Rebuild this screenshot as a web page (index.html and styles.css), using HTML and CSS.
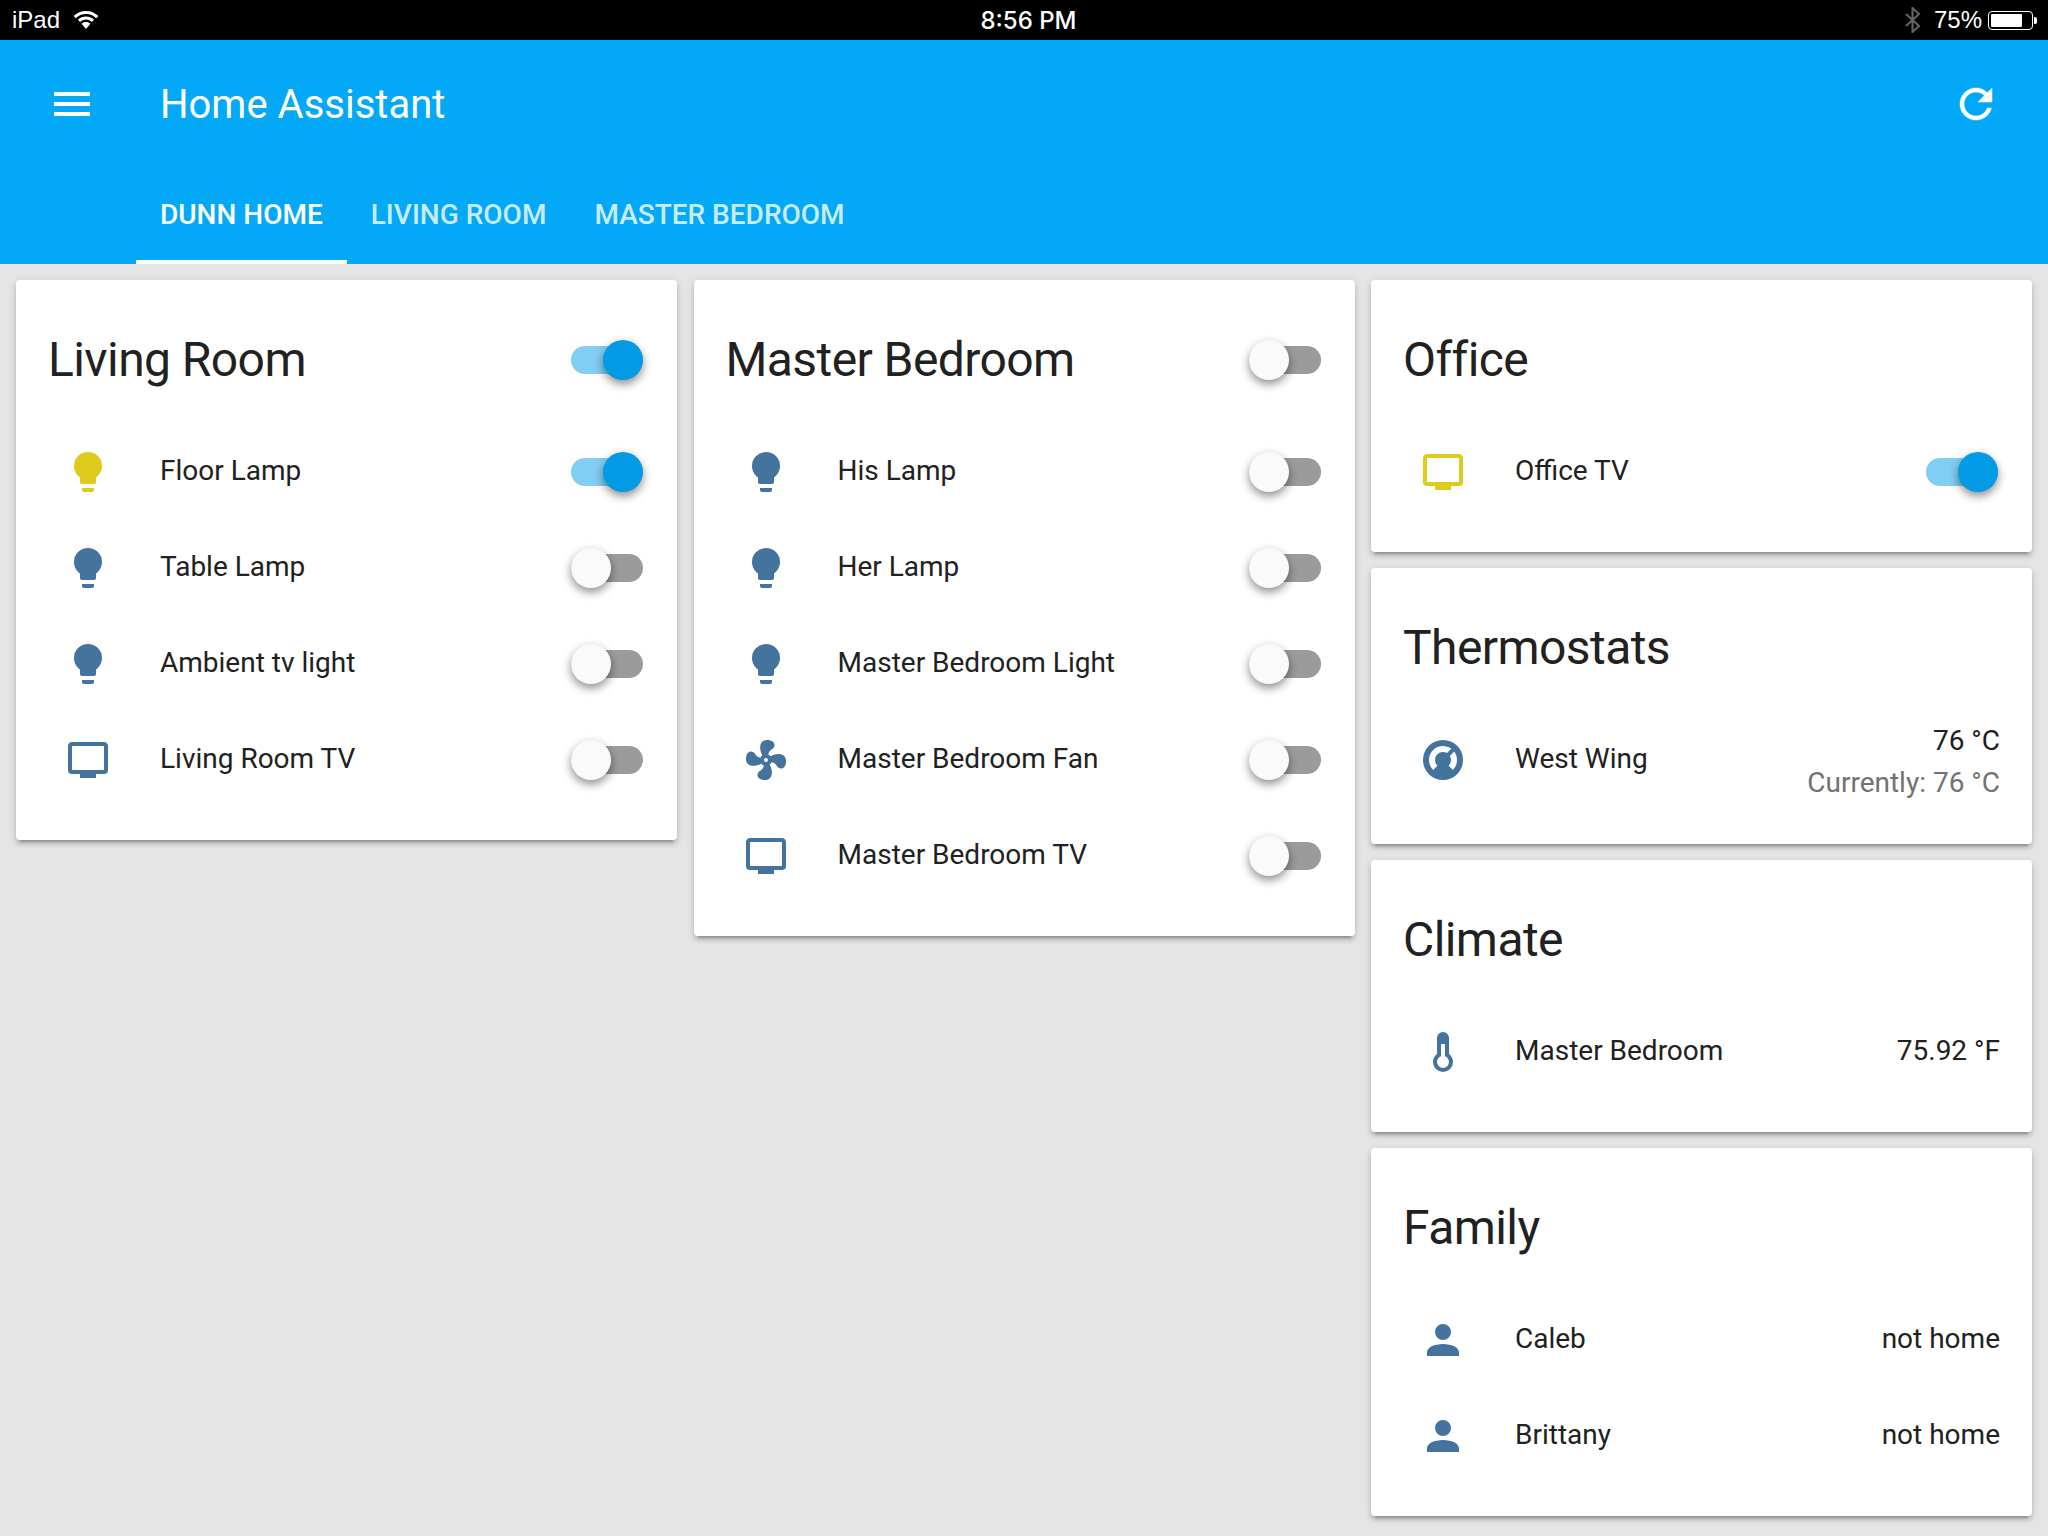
FILE: index.html
```html
<!DOCTYPE html>
<html lang="en">
<head>
    <meta charset="UTF-8">
    <title>Home Assistant</title>
    <link rel="stylesheet" href="styles.css">
</head>
<body>
    <svg class="defs">
        <symbol id="i-bulb" viewBox="0 0 24 24"><path d="M12,2A7,7 0 0,0 5,9C5,11.38 6.19,13.47 8,14.74V17A1,1 0 0,0 9,18H15A1,1 0 0,0 16,17V14.74C17.81,13.47 19,11.38 19,9A7,7 0 0,0 12,2M9,21A1,1 0 0,0 10,22H14A1,1 0 0,0 15,21V20H9V21Z"/></symbol>
        <symbol id="i-tv" viewBox="0 0 24 24"><path d="M20,17H4V5H20M20,3H4C2.89,3 2,3.89 2,5V17A2,2 0 0,0 4,19H8V21H16V19H20A2,2 0 0,0 22,17V5C22,3.89 21.1,3 20,3Z"/></symbol>
        <symbol id="i-fan" viewBox="0 0 24 24"><path d="M12,11A1,1 0 0,0 11,12A1,1 0 0,0 12,13A1,1 0 0,0 13,12A1,1 0 0,0 12,11M12.5,2C17,2 17.11,5.57 14.75,6.75C13.76,7.24 13.32,8.29 13.13,9.22C13.61,9.42 14.03,9.73 14.35,10.13C18.05,8.13 22.03,8.92 22.03,12.5C22.03,17 18.46,17.1 17.28,14.73C16.78,13.74 15.72,13.3 14.79,13.11C14.59,13.59 14.28,14 13.88,14.34C15.87,18.03 15.08,22 11.5,22C7,22 6.91,18.42 9.27,17.24C10.25,16.75 10.69,15.71 10.89,14.79C10.4,14.59 9.97,14.27 9.65,13.87C5.96,15.85 2,15.07 2,11.5C2,7 5.56,6.89 6.74,9.26C7.24,10.25 8.29,10.68 9.22,10.87C9.41,10.39 9.73,9.97 10.14,9.65C8.15,5.96 8.94,2 12.5,2Z"/></symbol>
        <symbol id="i-person" viewBox="0 0 24 24"><path d="M12,4A4,4 0 0,1 16,8A4,4 0 0,1 12,12A4,4 0 0,1 8,8A4,4 0 0,1 12,4M12,14C16.42,14 20,15.79 20,18V20H4V18C4,15.79 7.58,14 12,14Z"/></symbol>
        <symbol id="i-temp" viewBox="0 0 24 24"><path d="M17,17A5,5 0 0,1 12,22A5,5 0 0,1 7,17C7,15.36 7.79,13.91 9,13V5A3,3 0 0,1 12,2A3,3 0 0,1 15,5V13C16.21,13.91 17,15.36 17,17M11,8V14.17C9.83,14.58 9,15.69 9,17A3,3 0 0,0 12,20A3,3 0 0,0 15,17C15,15.69 14.17,14.58 13,14.17V8H11Z"/></symbol>
        <symbol id="i-nest" viewBox="0 0 24 24"><path fill-rule="evenodd" d="M16.95,16.95L14.83,14.83C15.55,14.1 16,13.1 16,12C16,11.26 15.79,10.57 15.43,10L17.6,7.81C18.5,9.03 19,10.5 19,12C19,13.78 18.32,15.57 16.95,16.95M12,5C13.5,5 15,5.5 16.19,6.4L14,8.56C13.43,8.21 12.74,8 12,8A4,4 0 0,0 8,12C8,13.1 8.45,14.1 9.17,14.83L7.05,16.95C5.68,15.57 5,13.78 5,12A7,7 0 0,1 12,5M12,2A10,10 0 0,0 2,12A10,10 0 0,0 12,22A10,10 0 0,0 22,12A10,10 0 0,0 12,2Z"/></symbol>
    </svg>

    <div class="statusbar">
        <div class="status-left">
            <span>iPad</span>
            <svg class="wifi" viewBox="0 0 26 18"><path d="M13,0C8,0 3.900,1.900 .6,5L2.700,7.200C5.400,4.600 9,3 13,3C17,3 20.600,4.600 23.300,7.200L25.400,5C22.100,1.900 18,0 13,0M13,5.500C9.900,5.500 7.200,6.700 5,8.700L7.100,10.900C8.700,9.400 10.700,8.500 13,8.500C15.300,8.500 17.300,9.400 18.900,10.900L21,8.700C18.800,6.700 16.100,5.500 13,5.500M13,11C11.300,11 9.800,11.600 8.600,12.700L13,18L17.400,12.700C16.200,11.600 14.700,11 13,11Z"/></svg>
        </div>
        <span class="status-time">8:56 PM</span>
        <div class="status-right">
            <svg class="bluetooth" viewBox="0 0 16 26"><path d="M1,7L14,19L7.500,25V1L14,7L1,19" fill="none" stroke="#666" stroke-width="2"/></svg>
            <span>75%</span>
            <div class="battery"><div class="battery-fill"></div></div>
            <div class="battery-nub"></div>
        </div>
    </div>

    <header class="app-header">
        <div class="toolbar">
            <svg class="icon white" viewBox="0 0 24 24"><path d="M3,6H21V8H3V6M3,11H21V13H3V11M3,16H21V18H3V16Z"/></svg>
            <div class="app-title">Home Assistant</div>
            <svg class="icon white refresh" viewBox="0 0 24 24"><path d="M17.65 6.35C16.2 4.9 14.21 4 12 4c-4.42 0-7.99 3.58-7.99 8s3.57 8 7.99 8c3.73 0 6.84-2.55 7.73-6h-2.08c-.82 2.33-3.04 4-5.65 4-3.31 0-6-2.69-6-6s2.69-6 6-6c1.66 0 3.14.69 4.22 1.78L13 11h7V4l-2.35 2.35z"/></svg>
        </div>
        <nav class="tabs">
            <a class="tab active">Dunn Home</a>
            <a class="tab">Living Room</a>
            <a class="tab">Master Bedroom</a>
        </nav>
    </header>

    <main class="columns">
        <div class="column">
            <section class="card">
                <div class="card-title"><h2>Living Room</h2><div class="toggle on"></div></div>
                <div class="row"><svg class="icon yellow"><use href="#i-bulb"/></svg><span class="name">Floor Lamp</span><div class="toggle on"></div></div>
                <div class="row"><svg class="icon blue"><use href="#i-bulb"/></svg><span class="name">Table Lamp</span><div class="toggle"></div></div>
                <div class="row"><svg class="icon blue"><use href="#i-bulb"/></svg><span class="name">Ambient tv light</span><div class="toggle"></div></div>
                <div class="row"><svg class="icon blue"><use href="#i-tv"/></svg><span class="name">Living Room TV</span><div class="toggle"></div></div>
            </section>
        </div>
        <div class="column">
            <section class="card">
                <div class="card-title"><h2>Master Bedroom</h2><div class="toggle"></div></div>
                <div class="row"><svg class="icon blue"><use href="#i-bulb"/></svg><span class="name">His Lamp</span><div class="toggle"></div></div>
                <div class="row"><svg class="icon blue"><use href="#i-bulb"/></svg><span class="name">Her Lamp</span><div class="toggle"></div></div>
                <div class="row"><svg class="icon blue"><use href="#i-bulb"/></svg><span class="name">Master Bedroom Light</span><div class="toggle"></div></div>
                <div class="row"><svg class="icon blue"><use href="#i-fan"/></svg><span class="name">Master Bedroom Fan</span><div class="toggle"></div></div>
                <div class="row"><svg class="icon blue"><use href="#i-tv"/></svg><span class="name">Master Bedroom TV</span><div class="toggle"></div></div>
            </section>
        </div>
        <div class="column">
            <section class="card">
                <div class="card-title"><h2>Office</h2></div>
                <div class="row"><svg class="icon yellow"><use href="#i-tv"/></svg><span class="name">Office TV</span><div class="toggle on"></div></div>
            </section>
            <section class="card">
                <div class="card-title"><h2>Thermostats</h2></div>
                <div class="row row-tall">
                    <svg class="icon blue"><use href="#i-nest"/></svg><span class="name">West Wing</span>
                    <div class="value-stack"><div>76 °C</div><div class="muted">Currently: 76 °C</div></div>
                </div>
            </section>
            <section class="card">
                <div class="card-title"><h2>Climate</h2></div>
                <div class="row"><svg class="icon blue"><use href="#i-temp"/></svg><span class="name">Master Bedroom</span><span class="value">75.92 °F</span></div>
            </section>
            <section class="card">
                <div class="card-title"><h2>Family</h2></div>
                <div class="row"><svg class="icon blue"><use href="#i-person"/></svg><span class="name">Caleb</span><span class="value">not home</span></div>
                <div class="row"><svg class="icon blue"><use href="#i-person"/></svg><span class="name">Brittany</span><span class="value">not home</span></div>
            </section>
        </div>
    </main>
</body>
</html>
```

FILE: styles.css
```css
body {
    margin: 0;
    background-color: #E5E5E5;
    color: #212121;
    font-family: Roboto, sans-serif;
    font-size: 28px;
}
.defs {
    display: none;
}
.statusbar {
    height: 40px;
    padding: 0 11px 0 12px;
    background: #000;
    color: #fff;
    font-family: "Liberation Sans", sans-serif;
    font-size: 24px;
    display: grid;
    grid-template-columns: 1fr auto 1fr;
    align-items: center;
}
.status-left, .status-right {
    display: flex;
    align-items: center;
}
.status-right {
    justify-content: flex-end;
}
.status-time {
    margin-left: 8px;
    font-family: Inter, sans-serif;
    font-weight: 500;
}
.wifi {
    width: 26px;
    height: 18px;
    margin-left: 13px;
    fill: #fff;
}
.bluetooth {
    width: 16px;
    height: 26px;
    margin-right: 13px;
}
.battery {
    width: 45px;
    height: 19px;
    margin-left: 6px;
    padding: 2px;
    box-sizing: border-box;
    border: 1px solid #fff;
    border-radius: 4px;
}
.battery-fill {
    width: 31px;
    height: 100%;
    background: #fff;
    border-radius: 1px;
}
.battery-nub {
    width: 3px;
    height: 7px;
    margin-left: 1px;
    background: #fff;
    border-radius: 0 2px 2px 0;
}
.app-header {
    height: 224px;
    background-color: #03A9F6;
    color: #fff;
}
.toolbar {
    height: 128px;
    padding: 0 48px;
    display: flex;
    align-items: center;
}
.app-title {
    flex: 1;
    margin-left: 64px;
    font-size: 40px;
}
.tabs {
    height: 96px;
    padding-left: 136px;
    display: flex;
}
.tab {
    padding: 17px 24px 0;
    font-weight: 500;
    text-transform: uppercase;
    color: rgba(255, 255, 255, 0.8);
    line-height: 60px;
    box-sizing: border-box;
}
.tab.active {
    color: #fff;
    border-bottom: 4px solid #fff;
}
.icon {
    width: 48px;
    height: 48px;
    flex: none;
}
.icon.white {
    fill: #fff;
}
.icon.refresh {
    stroke: #fff;
    stroke-width: 0.25;
}
.icon.blue {
    fill: #44739E;
}
.icon.yellow {
    fill: #DFCB1D;
}
.columns {
    padding: 16px;
    display: grid;
    grid-template-columns: repeat(3, 1fr);
    gap: 16.5px;
    align-items: start;
}
.column {
    display: flex;
    flex-direction: column;
    gap: 16px;
}
.card {
    padding: 0 32px 32px;
    background: #fff;
    border-radius: 4px;
    box-shadow: 0 4px 4px rgba(0, 0, 0, 0.14), 0 2px 10px rgba(0, 0, 0, 0.12), 0 6px 2px -4px rgba(0, 0, 0, 0.2);
}
.card-title {
    height: 144px;
    padding-top: 16px;
    box-sizing: border-box;
    display: flex;
    align-items: center;
    justify-content: space-between;
}
.card-title h2 {
    margin: -2px 0 0;
    font-size: 48px;
    font-weight: 400;
    letter-spacing: -0.012em;
}
.row {
    height: 96px;
    display: flex;
    align-items: center;
}
.row-tall {
    height: 100px;
}
.row .icon {
    margin-left: 16px;
}
.row-tall .icon {
    margin-bottom: 4px;
}
.name {
    flex: 1;
    margin-left: 48px;
    padding-bottom: 4px;
}
.row-tall .name {
    padding-bottom: 7px;
}
.value {
    padding-bottom: 4px;
}
.value-stack {
    text-align: right;
    line-height: 42px;
}
.muted {
    color: #727272;
}
.toggle {
    position: relative;
    width: 72px;
    height: 28px;
    margin-right: 2px;
    border-radius: 14px;
    background: #9B9B9B;
}
.toggle::after {
    content: "";
    position: absolute;
    top: -6px;
    left: 0;
    width: 40px;
    height: 40px;
    border-radius: 50%;
    background: #FAFAFA;
    box-shadow: 0 4px 10px rgba(0, 0, 0, 0.45);
}
.toggle.on {
    background: #81CEF2;
}
.toggle.on::after {
    left: 32px;
    background: #039BE5;
}
```
